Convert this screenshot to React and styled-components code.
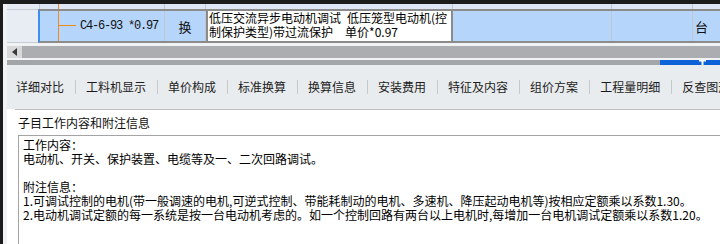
import React from 'react';
import styled, { createGlobalStyle } from 'styled-components';

const GlobalStyle = createGlobalStyle`
  html, body {
    margin: 0;
    padding: 0;
    background: #1c1c1c;
  }
  body {
    font-family: "Noto Sans CJK SC", "Noto Sans", sans-serif;
    font-size: 12px;
    color: #000;
  }
`;

const tabs = ['详细对比', '工料机显示', '单价构成', '标准换算', '换算信息', '安装费用', '特征及内容', '组价方案', '工程量明细', '反查图形工程量'];

const workLines = [
	'工作内容：',
	'电动机、开关、保护装置、电缆等及一、二次回路调试。',
	'',
	'附注信息：',
	'1.可调试控制的电机(带一般调速的电机,可逆式控制、带能耗制动的电机、多速机、降压起动电机等)按相应定额乘以系数1.30。',
	'2.电动机调试定额的每一系统是按一台电动机考虑的。如一个控制回路有两台以上电机时,每增加一台电机调试定额乘以系数1.20。',
];

const App = () => {
	return (
		<>
			<GlobalStyle />
			<Screen>
				<Window>
					<Grid>
						<Strip>
							<StripCell w={33} />
							<StripCell w={125}>
								<TreeStem />
							</StripCell>
							<StripCell w={41} />
							<StripCell w={247} />
							<StripCell w={159} />
							<StripCell w={81} />
							<StripCell />
						</Strip>
						<RowWrap>
							<RowHead />
							<Row>
								<CodeCell>
									<TreeLine />
									<Code>C4-6-93 *0.97</Code>
								</CodeCell>
								<TypeCell>换</TypeCell>
								<NameCell>
									{'低压交流异步电动机调试\u2002低压笼型电动机(控\n制保护类型)带过流保护\u2002\u2002单价*0.97'}
								</NameCell>
								<Cell w={159} />
								<Cell w={81} />
								<UnitCell>台</UnitCell>
							</Row>
						</RowWrap>
					</Grid>
					<HScroll>
						<ArrowBox>
							<svg width="5" height="8" viewBox="0 0 5 8">
								<path d="M5 0 L0 4 L5 8 Z" fill="#3a3a3a" />
							</svg>
						</ArrowBox>
						<Thumb />
					</HScroll>
					<Ruler>
						<BlueSeg>
							<Marker>
								<svg width="7" height="5" viewBox="0 0 7 5">
									<path d="M0 0 H7 V1.5 H4.5 V5 H2.5 V1.5 H0 Z" fill="#fff" />
								</svg>
							</Marker>
						</BlueSeg>
					</Ruler>
					<Toolbar>
						{tabs.map((t, i) => (
							<React.Fragment key={t}>
								{i > 0 && <Sep />}
								<Tab first={i === 0}>{t}</Tab>
							</React.Fragment>
						))}
					</Toolbar>
					<Panel>
						<Section>
							<SectionTitle>子目工作内容和附注信息</SectionTitle>
							<TextBox>{workLines.join('\n')}</TextBox>
						</Section>
					</Panel>
				</Window>
			</Screen>
		</>
	);
};

export default App;

const Screen = styled.div`
	width: 720px;
	height: 244px;
	overflow: hidden;
	box-sizing: border-box;
	padding: 4px 0 0 3px;
	background: #1c1c1c;
`;
const Window = styled.div`
	height: 100%;
	display: flex;
	flex-direction: column;
	background: #f1f2f3;
	padding-left: 4px;
`;
const Grid = styled.div`
	display: flex;
	flex-direction: column;
	flex-shrink: 0;
`;
const Strip = styled.div`
	display: flex;
	height: 5px;
	background: #dde7f6;
`;
const StripCell = styled.div`
	box-sizing: border-box;
	height: 100%;
	width: ${(p) => (p.w ? `${p.w}px` : 'auto')};
	flex: ${(p) => (p.w ? '0 0 auto' : '1')};
	border-right: ${(p) => (p.w ? '1px solid #c3c8d0' : 'none')};
	padding-left: 18px;
	&:first-child {
		background: #e6ebf3;
	}
`;
const TreeStem = styled.div`
	width: 1px;
	height: 100%;
	background: #f08a1c;
`;
const RowWrap = styled.div`
	display: flex;
	height: 34px;
`;
const RowHead = styled.div`
	width: 31px;
	flex-shrink: 0;
	box-sizing: border-box;
	background: #e8ecf3;
	border-top: 1px solid #c7ccd4;
	border-bottom: 1px solid #c7ccd4;
`;
const Row = styled.div`
	flex: 1;
	display: flex;
	box-sizing: border-box;
	background: #b6d5fa;
	border-top: 2px solid #8b8b8b;
	border-bottom: 2px solid #8b8b8b;
	border-left: 2px solid #3c8ef0;
`;
const Cell = styled.div`
	box-sizing: border-box;
	width: ${(p) => p.w}px;
	flex-shrink: 0;
	border-right: 1px solid #c3c8d0;
`;
const CodeCell = styled(Cell).attrs({ w: 125 })`
	display: flex;
	align-items: center;
	padding-left: 18px;
`;
const TreeLine = styled.div`
	position: relative;
	width: 22px;
	height: 100%;
	border-left: 1px solid #f08a1c;
	box-sizing: border-box;
	&::after {
		content: '';
		position: absolute;
		left: 0;
		top: 14px;
		width: 17px;
		height: 1px;
		background: #f08a1c;
	}
`;
const Code = styled.span`
	font-family: "Liberation Mono", monospace;
	font-size: 12px;
	letter-spacing: -1.2px;
	color: #111;
`;
const TypeCell = styled(Cell).attrs({ w: 41 })`
	display: flex;
	align-items: center;
	justify-content: center;
	font-size: 13px;
	color: #111;
`;
const NameCell = styled.div`
	box-sizing: border-box;
	width: 247px;
	flex-shrink: 0;
	background: #fff;
	border-left: 2px solid #8b8b8b;
	border-right: 2px solid #8b8b8b;
	padding-left: 1px;
	font-size: 12px;
	line-height: 14px;
	white-space: pre;
	overflow: hidden;
	color: #000;
`;
const UnitCell = styled.div`
	flex: 1;
	display: flex;
	align-items: center;
	padding-left: 2px;
	font-size: 13px;
	color: #111;
`;
const HScroll = styled.div`
	display: flex;
	height: 12px;
	margin-top: 3px;
	background: #abadb0;
`;
const ArrowBox = styled.div`
	width: 15px;
	display: flex;
	align-items: center;
	justify-content: center;
	background: #d6d8da;
`;
const Thumb = styled.div`
	flex: 1;
	background: #abadb0;
	border-radius: 6px 0 0 6px;
`;
const Ruler = styled.div`
	display: flex;
	justify-content: flex-end;
	height: 5px;
	margin-top: 2px;
	background: #a3a6a9;
`;
const BlueSeg = styled.div`
	position: relative;
	width: 60px;
	background: #0c62d6;
`;
const Marker = styled.div`
	position: absolute;
	left: 39px;
	top: 0;
	line-height: 0;
`;
const Toolbar = styled.div`
	display: flex;
	align-items: center;
	height: 45px;
	flex-shrink: 0;
	background: #e9ecef;
	border-bottom: 1px solid #bdbfc1;
	box-sizing: border-box;
	white-space: nowrap;
	overflow: hidden;
`;
const Tab = styled.div`
	padding: 0 11px 0 ${(p) => (p.first ? '9px' : '10px')};
	font-size: 12px;
	line-height: 16px;
	color: #1c1c1c;
`;
const Sep = styled.div`
	width: 1px;
	height: 14px;
	background: #c6c9cc;
	flex-shrink: 0;
`;
const Panel = styled.div`
	flex: 1;
	background: #fff;
	padding-left: 8px;
	display: flex;
	margin-top: -1px;
`;
const Section = styled.div`
	flex: 1;
	display: flex;
	flex-direction: column;
	border-top: 1px solid #bdbdbd;
	padding-left: 3px;
`;
const SectionTitle = styled.div`
	height: 25px;
	line-height: 25px;
	font-size: 12px;
	color: #111;
`;
const TextBox = styled.div`
	flex: 1;
	border-top: 1px solid #a4a4a4;
	border-left: 1px solid #a4a4a4;
	padding: 2px 0 0 4px;
	font-size: 12px;
	line-height: 14px;
	white-space: pre;
	overflow: hidden;
	color: #000;
`;
